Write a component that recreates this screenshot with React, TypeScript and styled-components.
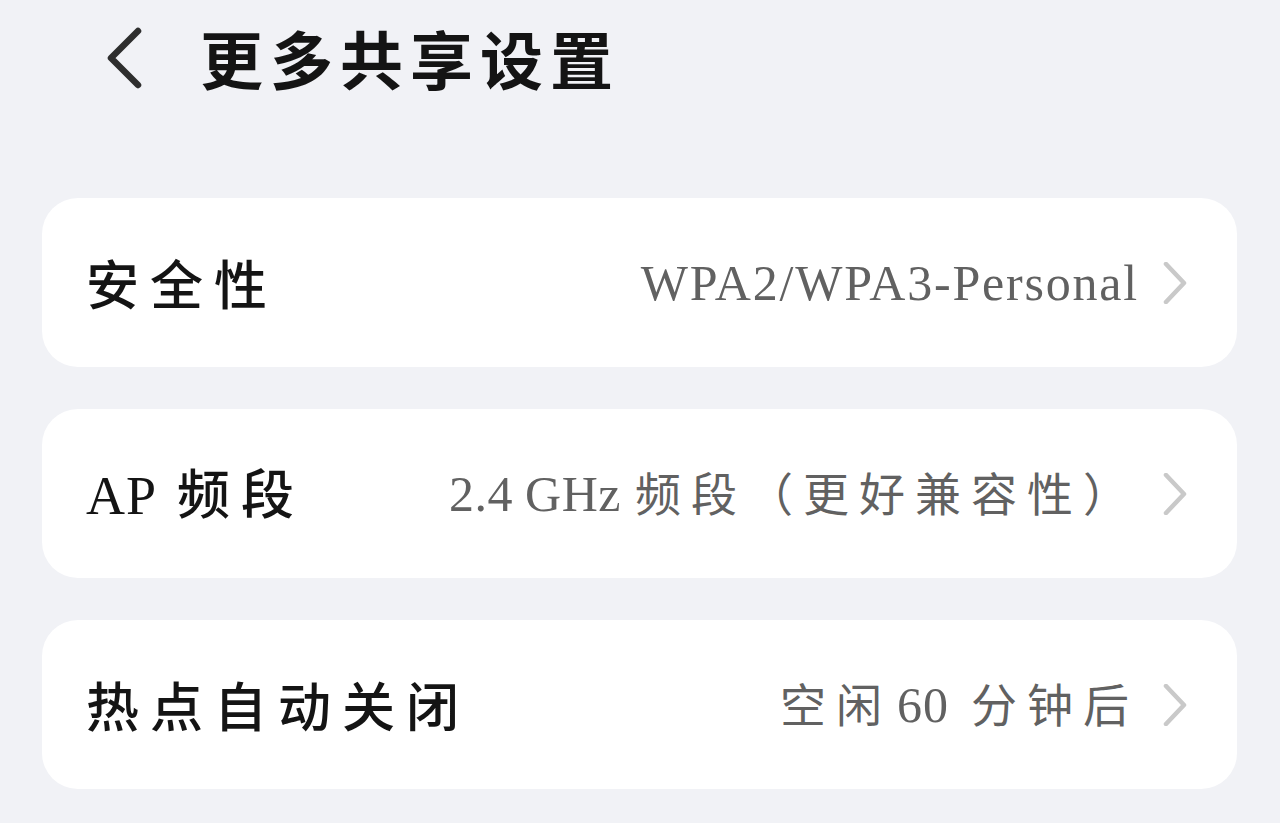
import React from "react";
import styled, { createGlobalStyle } from "styled-components";

const GlobalStyle = createGlobalStyle`
  html, body {
    margin: 0;
    padding: 0;
    background: #f1f2f6;
  }
  body {
    font-family: "Noto Sans CJK SC", "Noto Sans", sans-serif;
  }
`;

const Page = styled.div`
  min-height: 100vh;
  background: #f1f2f6;
  box-sizing: border-box;
`;

const Header = styled.header`
  height: 112px;
  display: flex;
  align-items: center;
  padding-left: 105px;
`;

const BackButton = styled.button`
  border: 0;
  background: transparent;
  padding: 0;
  width: 38px;
  height: 62px;
  display: flex;
  align-items: center;
  justify-content: center;
  cursor: pointer;
  margin-top: 4px;
`;

const Title = styled.h1`
  margin: 0 0 0 57px;
  font-family: "Noto Sans CJK SC", sans-serif;
  font-weight: 700;
  font-size: 63px;
  letter-spacing: 7px;
  line-height: 1;
  color: #141414;
`;

const List = styled.main`
  display: flex;
  flex-direction: column;
  gap: 42px;
  padding: 86px 43px 0 42px;
`;

const Card = styled.div`
  height: 169px;
  background: #ffffff;
  border-radius: 36px;
  display: flex;
  align-items: center;
  padding: 0 50px 0 44px;
  box-sizing: border-box;
`;

const Label = styled.div`
  flex: 1;
  display: flex;
  align-items: baseline;
  white-space: nowrap;
  color: #141414;
  line-height: 1;
`;

const Value = styled.div`
  display: flex;
  align-items: baseline;
  white-space: nowrap;
  color: #616161;
  line-height: 1;
  margin-right: 24px;
`;

const Han = styled.span<{ $size: number; $spacing: number; $weight?: number; $gap?: number }>`
  font-family: "Noto Sans CJK SC", sans-serif;
  font-size: ${(p) => p.$size}px;
  font-weight: ${(p) => p.$weight ?? 400};
  letter-spacing: ${(p) => p.$spacing}px;
  margin-right: ${(p) => p.$gap ?? 0}px;
`;

const Lat = styled.span<{ $size: number; $spacing?: number; $gap?: number }>`
  font-family: "Liberation Serif", serif;
  font-size: ${(p) => p.$size}px;
  letter-spacing: ${(p) => p.$spacing ?? 1}px;
  margin-right: ${(p) => p.$gap ?? 0}px;
`;

const ChevronWrap = styled.span`
  display: flex;
  align-items: center;
  width: 24px;
  height: 42px;
`;

const Chevron = () => (
  <ChevronWrap>
    <svg width="24" height="42" viewBox="0 0 24 42" fill="none">
      <polyline
        points="3,2 21,21 3,40"
        stroke="#c9c9c9"
        strokeWidth="4.5"
        strokeLinecap="round"
        strokeLinejoin="round"
      />
    </svg>
  </ChevronWrap>
);

const LS = 53; // label size
const LSP = 11;
const LW = 500;
const VS = 46;
const VSP = 10;

export default function App() {
  return (
    <Page>
      <GlobalStyle />
      <Header>
        <BackButton aria-label="返回">
          <svg width="38" height="62" viewBox="0 0 38 62" fill="none">
            <polyline
              points="33,4 6,31 33,58"
              stroke="#2e2e2e"
              strokeWidth="6.5"
              strokeLinecap="round"
              strokeLinejoin="round"
            />
          </svg>
        </BackButton>
        <Title>更多共享设置</Title>
      </Header>
      <List>
        <Card>
          <Label>
            <Han $size={LS} $spacing={LSP} $weight={LW}>安全性</Han>
          </Label>
          <Value>
            <Lat $size={50} $spacing={1.8}>WPA2/WPA3-Personal</Lat>
          </Value>
          <Chevron />
        </Card>
        <Card>
          <Label>
            <Lat $size={54} $spacing={1} $gap={20}>AP</Lat>
            <Han $size={LS} $spacing={LSP} $weight={LW}>频段</Han>
          </Label>
          <Value>
            <Lat $size={50} $spacing={0.5} $gap={12}>2.4</Lat>
            <Lat $size={50} $spacing={0.5} $gap={14}>GHz</Lat>
            <Han $size={VS} $spacing={VSP}>频段（更好兼容性）</Han>
          </Value>
          <Chevron />
        </Card>
        <Card>
          <Label>
            <Han $size={LS} $spacing={LSP} $weight={LW}>热点自动关闭</Han>
          </Label>
          <Value>
            <Han $size={VS} $spacing={VSP} $gap={5}>空闲</Han>
            <Lat $size={50} $spacing={1} $gap={22}>60</Lat>
            <Han $size={VS} $spacing={VSP}>分钟后</Han>
          </Value>
          <Chevron />
        </Card>
      </List>
    </Page>
  );
}
